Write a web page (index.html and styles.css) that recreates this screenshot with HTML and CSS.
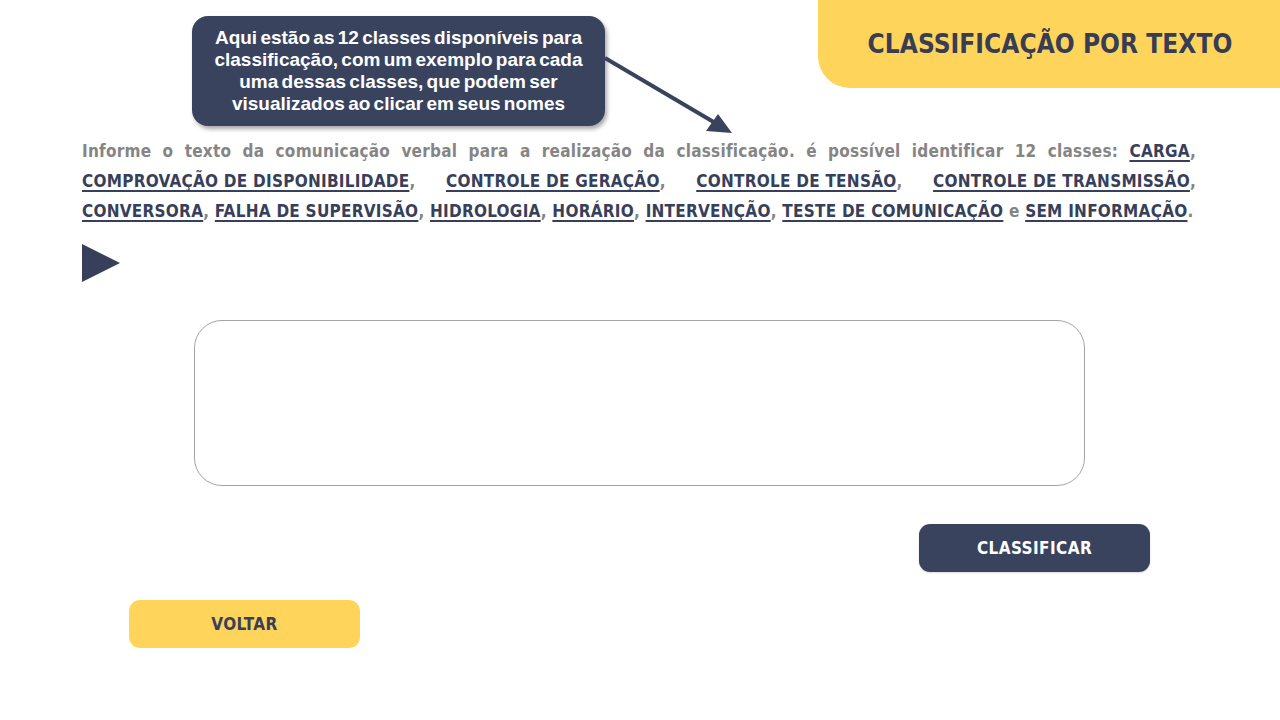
FILE: index.html
```html
<!DOCTYPE html>
<html lang="pt-BR">
<head>
<meta charset="utf-8">
<title>Classificação por texto</title>
<link rel="stylesheet" href="styles.css">
</head>
<body>
<div class="page">
  <header class="top">
    <div class="title-tab"><h1>CLASSIFICAÇÃO POR TEXTO</h1></div>
  </header>

  <p class="intro">Informe o texto da comunicação verbal para a realização da classificação. é possível identificar 12 classes: <span class="nw"><a href="#">CARGA</a>,</span> <span class="nw"><a href="#">COMPROVAÇÃO DE DISPONIBILIDADE</a>,</span> <span class="nw"><a href="#">CONTROLE DE GERAÇÃO</a>,</span> <span class="nw"><a href="#">CONTROLE DE TENSÃO</a>,</span> <span class="nw"><a href="#">CONTROLE DE TRANSMISSÃO</a>,</span> <span class="nw"><a href="#">CONVERSORA</a>,</span> <span class="nw"><a href="#">FALHA DE SUPERVISÃO</a>,</span> <span class="nw"><a href="#">HIDROLOGIA</a>,</span> <span class="nw"><a href="#">HORÁRIO</a>,</span> <span class="nw"><a href="#">INTERVENÇÃO</a>,</span> <a href="#">TESTE DE COMUNICAÇÃO</a> e <span class="nw"><a href="#">SEM INFORMAÇÃO</a>.</span></p>

  <div class="play"></div>

  <div class="input-row">
    <textarea class="text-box" aria-label="Texto da comunicação"></textarea>
  </div>

  <div class="action-row">
    <button class="btn btn-dark">CLASSIFICAR</button>
  </div>

  <div class="back-row">
    <button class="btn btn-yellow">VOLTAR</button>
  </div>

  <div class="callout">Aqui estão as 12 classes disponíveis para<br>classificação, com um exemplo para cada<br>uma dessas classes, que podem ser<br>visualizados ao clicar em seus nomes</div>
  <svg class="callout-arrow" width="140" height="90" viewBox="0 0 140 90">
    <line x1="2" y1="2" x2="114" y2="68" stroke="#3a435e" stroke-width="4"/>
    <polygon points="129,77 103,75 115,58" fill="#3a435e"/>
  </svg>
</div>
</body>
</html>
```

FILE: styles.css
```css
* { box-sizing: border-box; }
html, body { margin: 0; padding: 0; background: #ffffff; }
.page {
  position: relative;
  width: 1280px;
  height: 720px;
  overflow: hidden;
  font-family: "DejaVu Sans Condensed", "DejaVu Sans", sans-serif;
}
.top {
  display: flex;
  justify-content: flex-end;
  height: 88px;
}
.title-tab {
  width: 462px;
  height: 88px;
  background: #ffd45a;
  border-bottom-left-radius: 32px;
  display: flex;
  align-items: center;
  justify-content: center;
  padding-left: 2px;
}
.title-tab h1 {
  margin: 0;
  font-size: 26px;
  font-weight: 700;
  color: #363d55;
  letter-spacing: 0.05px;
}
.intro {
  margin: 48px 84px 0 82px;
  font-size: 17px;
  line-height: 30px;
  font-weight: 700;
  color: #858585;
  text-align: justify;
  letter-spacing: 0.25px;
}
.nw {
  white-space: nowrap;
}
.intro a {
  display: inline-block;
  white-space: nowrap;
  color: #383f5a;
  text-decoration: underline;
  text-underline-offset: 3px;
  text-decoration-thickness: 1.5px;
}
.play {
  margin: 18px 0 0 82px;
  width: 0;
  height: 0;
  border-top: 19px solid transparent;
  border-bottom: 19px solid transparent;
  border-left: 38px solid #383f5a;
}
.input-row {
  margin: 38px 0 0 194px;
}
.text-box {
  display: block;
  width: 891px;
  height: 166px;
  border: 1px solid #a3a3a3;
  border-radius: 28px;
  resize: none;
  outline: none;
  padding: 16px 24px;
  font-family: inherit;
  font-size: 16px;
}
.action-row {
  margin: 38px 0 0 919px;
}
.back-row {
  margin: 28px 0 0 129px;
}
.btn {
  display: block;
  width: 231px;
  height: 48px;
  border: none;
  border-radius: 11px;
  font-family: "DejaVu Sans Condensed", "DejaVu Sans", sans-serif;
  font-weight: 700;
  font-size: 17px;
  letter-spacing: 0.4px;
  cursor: pointer;
}
.btn-dark {
  background: #3a435e;
  color: #ffffff;
  box-shadow: 0 1px 2px rgba(0,0,0,0.15);
}
.btn-yellow {
  background: #ffd45a;
  color: #383f5a;
}
.callout {
  position: absolute;
  left: 192px;
  top: 16px;
  width: 413px;
  height: 110px;
  background: #3a435e;
  border-radius: 16px;
  box-shadow: 2px 3px 4px rgba(0,0,0,0.35);
  color: #ffffff;
  font-family: "Liberation Sans", Arial, sans-serif;
  font-weight: 700;
  font-size: 19px;
  line-height: 22px;
  text-align: center;
  padding: 11px 4px 0;
  word-spacing: -2px;
  white-space: nowrap;
}
.callout-arrow {
  position: absolute;
  left: 603px;
  top: 56px;
  overflow: visible;
}
```
